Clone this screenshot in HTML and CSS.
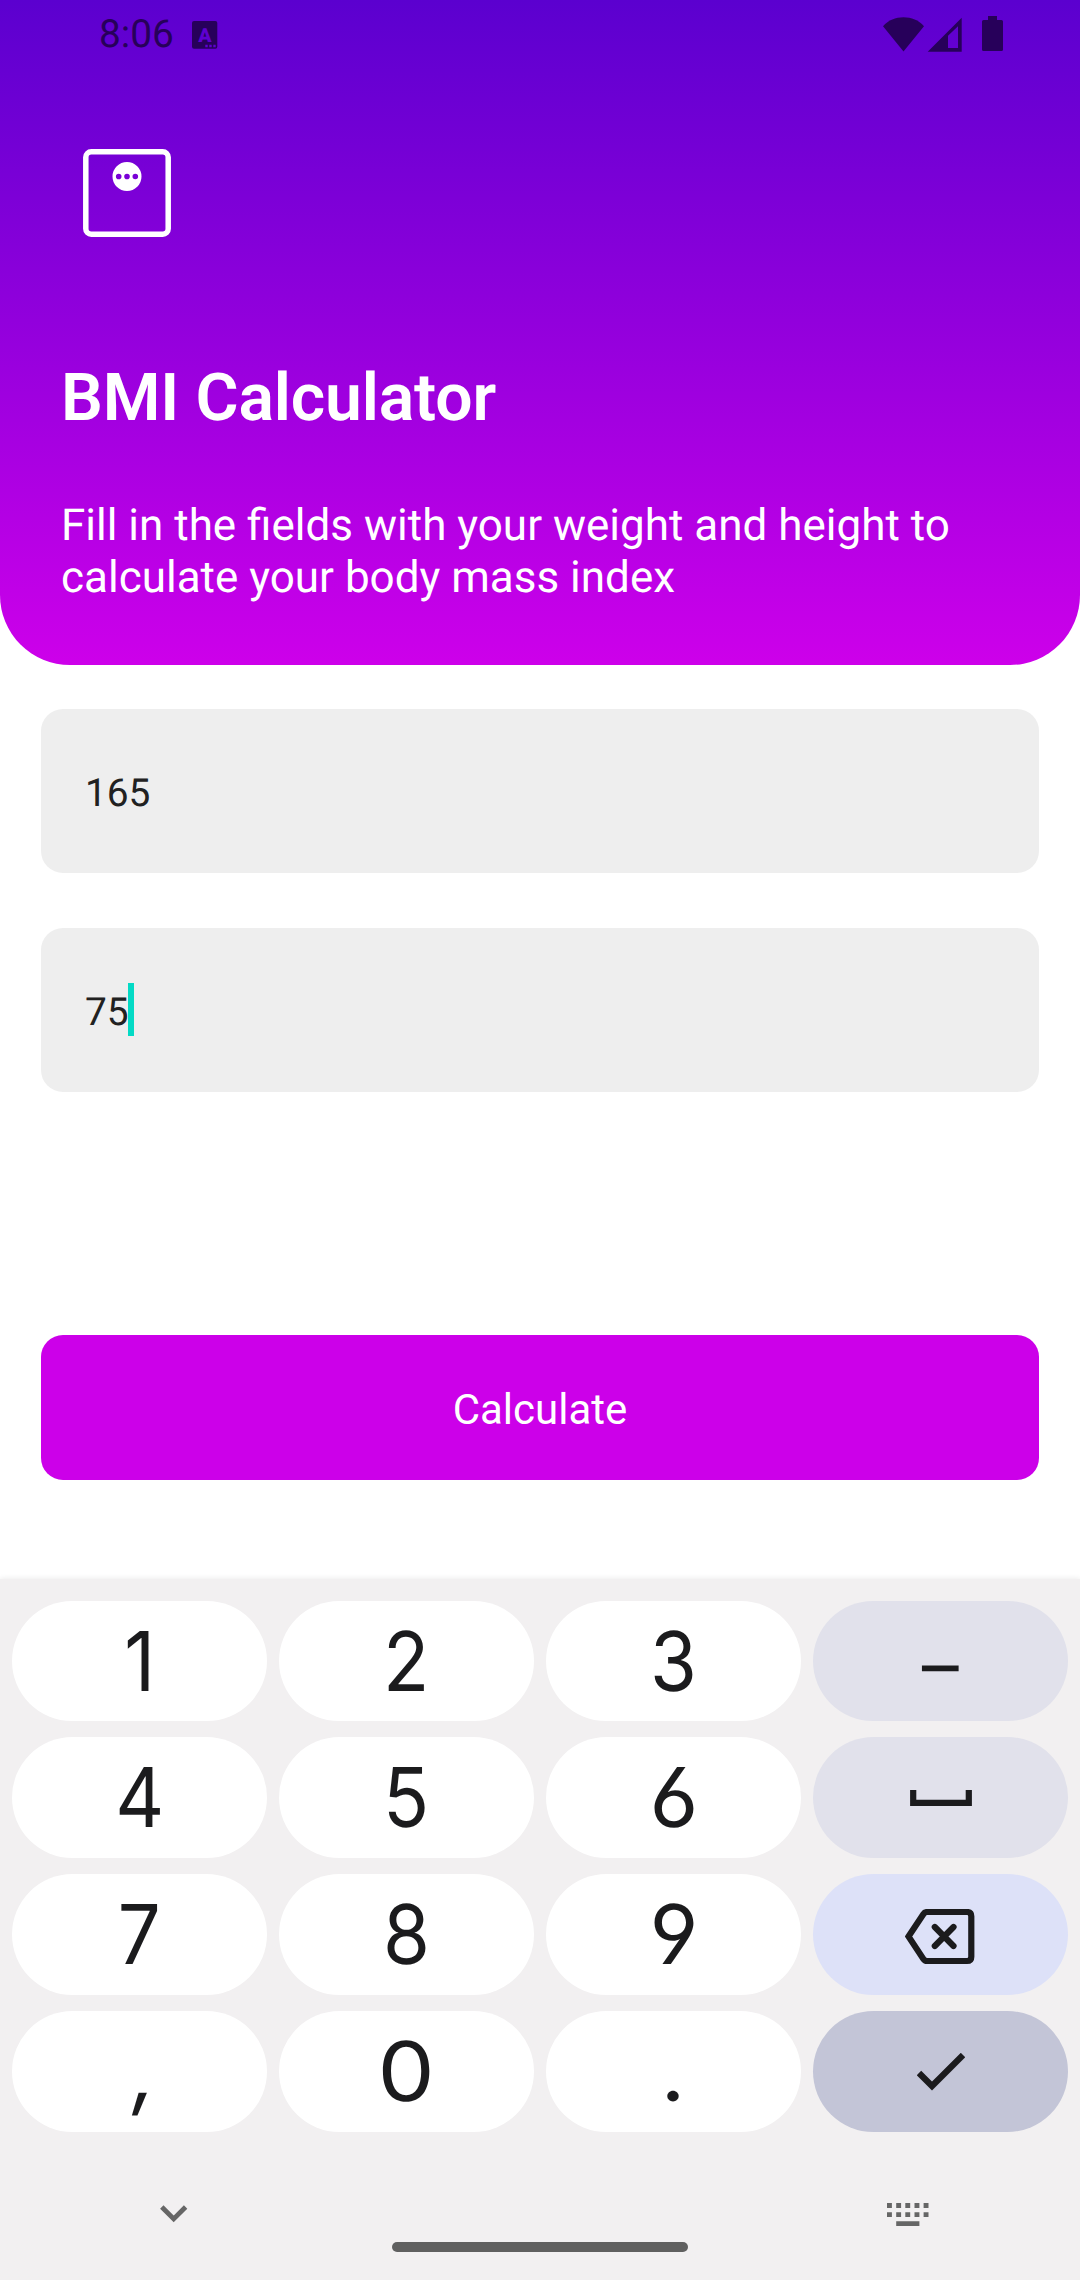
FILE: index.html
```html
<!DOCTYPE html>
<html lang="en">
<head>
<meta charset="utf-8">
<title>BMI Calculator</title>
<link rel="stylesheet" href="styles.css">
</head>
<body>
<div class="screen">
  <header class="header">
    <div class="status">
      <span class="clock">8:06</span>
      <svg class="status-app" width="26" height="28" viewBox="0 0 26 28">
        <rect x="0" y="0" width="25.3" height="27.7" rx="2" class="dark"/>
        <text x="12.8" y="20.6" class="status-letter">A</text>
        <path d="M13.3 23.8h2.4v2.4h-2.4zM17.3 23.8h2.4v2.4h-2.4zM21.3 23.8h2.4v2.4h-2.4z" class="cut"/>
      </svg>
      <svg class="status-system" width="121" height="36" viewBox="0 0 121 36">
        <path class="dark" d="M20.5 35.5 0 10.2C5.500 4 12.500 1.300 20.500 1.300S35.500 4 41 10.200Z"/>
        <path class="dark" fill-rule="evenodd" d="M44.700 35.700 78.700 1.700V35.700ZM65 19.700V32H75V10.300Z"/>
        <path class="dark" d="M105 0h9v4h4.500q1.500 0 1.500 1.500v28q0 1.500-1.500 1.500h-18q-1.500 0-1.500-1.500v-28q0-1.500 1.500-1.500h4.500z"/>
      </svg>
    </div>
    <svg class="logo" width="88" height="88" viewBox="0 0 88 88">
      <rect x="2.800" y="2.800" width="82.400" height="82.400" rx="5.500" fill="none" stroke="#fff" stroke-width="5.500"/>
      <path fill="#fff" fill-rule="evenodd" d="M29.500 27.500a14.500 14.500 0 1 1 29 0a14.500 14.500 0 1 1-29 0ZM32.900 27.500a2.800 2.800 0 1 0 5.600 0a2.800 2.800 0 1 0-5.600 0ZM41.200 27.500a2.800 2.800 0 1 0 5.600 0a2.800 2.800 0 1 0-5.600 0ZM49.500 27.500a2.800 2.800 0 1 0 5.600 0a2.800 2.800 0 1 0-5.600 0Z"/>
    </svg>
    <h1 class="title">BMI Calculator</h1>
    <p class="subtitle">Fill in the fields with your weight and height to calculate your body mass index</p>
  </header>

  <main class="form">
    <div class="field">165</div>
    <div class="field">75<span class="caret"></span></div>
    <button class="submit">Calculate</button>
  </main>

  <section class="keyboard">
    <div class="keys">
      <div class="key"><span class="digit">1</span></div>
      <div class="key"><span class="digit">2</span></div>
      <div class="key"><span class="digit">3</span></div>
      <div class="key soft"><span class="dash">–</span></div>
      <div class="key"><span class="digit">4</span></div>
      <div class="key"><span class="digit">5</span></div>
      <div class="key"><span class="digit open">6</span></div>
      <div class="key soft">
        <svg width="62" height="18" viewBox="0 0 62 18"><path d="M3.200 1v12.800h55.600V1" class="line"/></svg>
      </div>
      <div class="key"><span class="digit">7</span></div>
      <div class="key"><span class="digit">8</span></div>
      <div class="key"><span class="digit open">9</span></div>
      <div class="key erase">
        <svg class="erase-icon" width="70" height="56" viewBox="0 0 70 56">
          <path class="line" d="M3.500 27.500 18.300 5.200Q19.700 3 22.200 3H62Q66.300 3 66.300 7.300V47.700Q66.300 52 62 52H22.200Q19.700 52 18.300 49.800Z"/>
          <path class="line round" d="M29.800 18 48.500 37M48.500 18 29.800 37"/>
        </svg>
      </div>
      <div class="key"><span class="digit comma">,</span></div>
      <div class="key"><span class="digit zero">0</span></div>
      <div class="key"><span class="digit dot">.</span></div>
      <div class="key enter">
        <svg width="48" height="38" viewBox="0 0 48 38"><path class="line" d="M2 20 15 33 46 2"/></svg>
      </div>
    </div>
    <div class="tools">
      <svg width="28" height="20" viewBox="0 0 28 20"><path d="M1.800 4 13.700 15.900 25.600 4" fill="none" stroke="#666" stroke-width="4.800"/></svg>
      <svg width="42" height="23" viewBox="0 0 42 23"><path fill="#666" d="M0 0h4.900v4.900H0zM9.200 0h4.900v4.900H9.200zM18.300 0h4.900v4.900h-4.900zM27.500 0h4.900v4.900h-4.900zM36.600 0h4.900v4.900h-4.900zM0 9.200h4.900v4.900H0zM9.200 9.200h4.900v4.900H9.200zM18.300 9.200h4.900v4.900h-4.900zM27.500 9.200h4.900v4.900h-4.900zM36.600 9.200h4.900v4.900h-4.900zM9.200 18.300h23.200v4.700H9.200z"/></svg>
    </div>
    <div class="home-bar"></div>
  </section>
</div>
</body>
</html>
```

FILE: styles.css
```css
* { box-sizing: border-box; }

body {
  margin: 0;
  background: #fff;
  font-family: Roboto, "Liberation Sans", sans-serif;
  text-rendering: geometricPrecision;
}

svg { display: block; flex: none; }

.screen {
  display: flex;
  flex-direction: column;
  width: 1080px;
  height: 2280px;
  overflow: hidden;
}

.header {
  height: 665px;
  border-radius: 0 0 70px 70px;
  background: linear-gradient(#5b00cf, #cd00ea);
  color: #fff;
}

.status {
  display: flex;
  height: 149px;
  padding: 0 76px 0 99px;
}

.clock {
  padding-top: 12px;
  font-size: 38.8px;
  line-height: 46px;
  color: #27005a;
}

.dark { fill: #27005a; }
.cut { fill: #5e00d0; }

.status-app { margin: 21px 0 0 18px; }

.status-letter {
  fill: #5e00d0;
  font-size: 19.5px;
  font-weight: 900;
  text-anchor: middle;
}

.status-system { margin: 16px 0 0 auto; }

.logo { margin-left: 83px; }

.title {
  margin: 123px 0 0 61px;
  font-size: 66px;
  font-weight: 600;
  line-height: 78px;
  letter-spacing: -0.15px;
}

.subtitle {
  width: 920px;
  margin: 61px 0 0 61px;
  font-size: 44px;
  line-height: 52px;
}

.form {
  display: flex;
  flex-direction: column;
  height: 914px;
  padding: 44px 41px 0;
}

.field {
  display: flex;
  align-items: center;
  height: 164px;
  margin-bottom: 55px;
  padding: 4px 44px 0;
  border-radius: 22px;
  background: #eee;
  color: #212121;
  font-size: 38.8px;
}

.caret {
  width: 6px;
  height: 53px;
  margin: -5px 0 0 -0.5px;
  background: #03dac5;
}

.submit {
  height: 145px;
  margin-top: 188px;
  padding: 4px 0 0;
  border: 0;
  border-radius: 22px;
  background: #cc00e9;
  color: #fff;
  font: 400 42px Roboto, "Liberation Sans", sans-serif;
}

.keyboard {
  display: flex;
  flex: 1;
  flex-direction: column;
  padding: 22px 12px 0;
  background: #f2f0f1;
  box-shadow: 0 -1px 5px rgba(0, 0, 0, 0.07);
}

.keys {
  display: grid;
  grid-template-columns: repeat(4, 255px);
  grid-template-rows: 120px repeat(3, 121px);
  gap: 16px 12px;
}

.key {
  display: flex;
  align-items: center;
  justify-content: center;
  border-radius: 60.5px;
  background: #fff;
  color: #1b1b1d;
}

.soft { background: #e1e1eb; }
.erase { background: #dde1f8; }
.enter { background: #c3c5d7; }

.digit {
  margin-top: -1px;
  font-family: Inter, Roboto, sans-serif;
  font-size: 82.5px;
  line-height: 100px;
  font-weight: 400;
  font-feature-settings: "cv03", "cv04";
  transform: scaleX(0.92);
}

.open { transform: scaleX(1.02); }
.zero { transform: scaleX(1.1); }
.comma { transform: translateX(5px) skewX(-8deg); }
.dot { transform: translateX(-1px) scaleX(1.05); }

.dash {
  padding-top: 18px;
  font-size: 75px;
}

.line { fill: none; stroke: #1b1b1d; stroke-width: 6.2; }
.round { stroke-linecap: round; }
.erase-icon { margin: 5px 0 0 -2px; }

.tools {
  display: flex;
  justify-content: space-between;
  height: 36px;
  margin: 71px 139px 0 148px;
}

.home-bar {
  width: 296px;
  height: 10px;
  margin: 3px auto 0;
  border-radius: 5px;
  background: #606060;
}
```
